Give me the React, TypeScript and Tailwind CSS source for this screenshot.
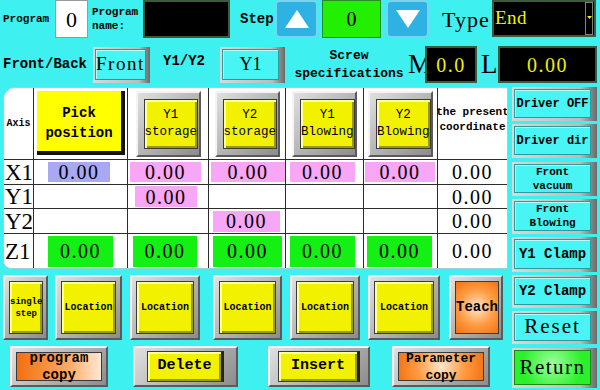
import React from "react";

type P = { className?: string; face?: string; children?: React.ReactNode };

const serif = "font-['Liberation_Serif',serif]";

// gray 3D frame around a coloured face, like the HMI buttons
const Framed = ({ className = "", face = "", children }: P) => (
  <div
    className={`flex p-[4px] border-2 border-t-[#f4f4f4] border-l-[#f4f4f4] border-b-[#5a5a5a] border-r-[#5a5a5a] bg-[linear-gradient(135deg,#e0e0e0,#8c8c8c)] ${className}`}
  >
    <div
      className={`flex-1 flex flex-col items-center justify-center text-center border border-[#3a3a3a] ${face}`}
    >
      {children}
    </div>
  </div>
);

const yellow =
  "bg-[#f2f200] shadow-[inset_2px_2px_0_#ffffa0,inset_-2px_-2px_0_#9a9a00] text-black";
const orange =
  "bg-[radial-gradient(circle,#ffe6cc_0%,#ff9a40_55%,#f07414_100%)] text-black";

const CyanBtn = ({ className = "", children }: P) => (
  <div
    className={`flex pt-[2px] pl-[2px] pr-[6px] pb-[3px] bg-[linear-gradient(90deg,#d8d8d8,#bcbcbc_80%,#6a6a6a)] ${className}`}
  >
    <div className="flex-1 flex flex-col items-center justify-center text-center border border-[#2a9a9a] bg-[#48f4f4] shadow-[inset_1px_1px_0_#b0ffff]">
      {children}
    </div>
  </div>
);

const Arrow = ({ up }: { up?: boolean }) => (
  <div className="w-[43px] h-[38px] rounded-[5px] bg-[#2eb2e4] border-2 border-[#78d4f0] flex items-center justify-center">
    <svg width="26" height="20" viewBox="0 0 26 20">
      {up ? (
        <polygon points="13,1 25,19 1,19" fill="#ffffff" />
      ) : (
        <polygon points="1,1 25,1 13,19" fill="#ffffff" />
      )}
    </svg>
  </div>
);

const Val = ({ c, w, ml, h = "h-[20px]" }: { c: string; w: string; ml: string; h?: string }) => (
  <div
    className={`${c} ${w} ${ml} ${h} flex items-center justify-center ${serif} text-[20px] tracking-[1.5px] leading-none`}
  >
    0.00
  </div>
);

const cell = "border-r border-b border-[#2c2c2c] flex items-center";
const cellLast =
  "border-b border-[#2c2c2c] flex items-center justify-center font-['Liberation_Serif',serif] text-[20px] tracking-[1.5px]";
const pink = "bg-[#f8a6f6]";
const green = "bg-[#14f014]";

const HeadBtn = ({ a, b }: { a: string; b: string }) => (
  <div className={`${cell} justify-center`}>
    <Framed className="w-[65px] h-[66px] p-[6px]" face={yellow}>
      <span className="text-[12.5px] leading-[17px] whitespace-nowrap">{a}</span>
      <span className="text-[12.5px] leading-[17px] whitespace-nowrap">{b}</span>
    </Framed>
  </div>
);

const Label = ({ t }: { t: string }) => (
  <div className={`${cell} pl-[1px] ${serif} text-[23px] leading-none`}>{t}</div>
);

export default function App() {
  return (
    <div className="w-[600px] h-[390px] overflow-hidden bg-[#3ef0f0] text-black font-['Liberation_Mono',monospace] flex flex-col">
      {/* top row */}
      <div className="h-[38px] flex">
        <span className="ml-[3px] w-[52px] self-center text-[11px] font-bold">Program</span>
        <div className="w-[33px] h-[38px] bg-white border border-[#9a9a9a] flex items-center justify-center font-['Liberation_Serif',serif] text-[22px]">
          0
        </div>
        <div className="ml-[4px] w-[51px] self-center text-[11px] font-bold leading-[14px]">
          Program
          <br />
          name:
        </div>
        <div className="w-[87px] h-[38px] bg-black border-2 border-[#3c5a3c]" />
        <span className="ml-[10px] w-[35px] self-center text-[14px] font-bold">Step</span>
        <Arrow up />
        <div className="ml-[4px] w-[59px] h-[38px] bg-[#22f000] border border-[#2a8a2a] flex items-center justify-center font-['Liberation_Serif',serif] text-[20px]">
          0
        </div>
        <div className="ml-[5px]">
          <Arrow />
        </div>
        <span className="ml-[13px] w-[50px] self-center font-['Liberation_Serif',serif] text-[22px] tracking-[1px]">
          Type
        </span>
        <div className="w-[104px] h-[37px] bg-black border-2 border-[#3c5a3c] flex items-center">
          <span className="ml-[1px] flex-1 font-['Liberation_Serif',serif] text-[19px] tracking-[0.5px] text-[#f0f000]">
            End
          </span>
          <div className="w-[8px] h-[33px] mr-[1px] border border-[#808080] flex items-start justify-center pt-[13px]">
            <svg width="5" height="3" viewBox="0 0 5 3">
              <polygon points="0,0 5,0 2.5,3" fill="#f0f000" />
            </svg>
          </div>
        </div>
      </div>

      {/* second row */}
      <div className="mt-[8px] h-[37px] flex items-center">
        <span className="ml-[3px] w-[90px] text-[14px] font-bold">Front/Back</span>
        <CyanBtn className="w-[57px] h-[36px]">
          <span className="font-['Liberation_Serif',serif] text-[19px] tracking-[1.5px]">Front</span>
        </CyanBtn>
        <span className="ml-[13px] w-[57px] text-[14px] font-bold -mt-[6px]">Y1/Y2</span>
        <CyanBtn className="w-[65px] h-[36px]">
          <span className="font-['Liberation_Serif',serif] text-[18px]">Y1</span>
        </CyanBtn>
        <div className="ml-[5px] w-[118px] text-center text-[13px] font-bold leading-[18px] whitespace-nowrap">
          Screw
          <br />
          specifications
        </div>
        <span className="w-[17px] font-['Liberation_Serif',serif] text-[27px] leading-none">M</span>
        <div className="w-[52px] h-[37px] bg-black border-2 border-[#3c5a3c] flex items-center justify-center font-['Liberation_Serif',serif] text-[20px] tracking-[1.5px] text-[#f0f000]">
          0.0
        </div>
        <span className="ml-[4px] w-[17px] font-['Liberation_Serif',serif] text-[27px] leading-none">L</span>
        <div className="w-[99px] h-[37px] bg-black border-2 border-[#3c5a3c] flex items-center justify-center font-['Liberation_Serif',serif] text-[20px] tracking-[1.5px] text-[#f0f000]">
          0.00
        </div>
      </div>

      {/* main area */}
      <div className="mt-[4px] flex">
        <div className="ml-[3px] w-[505px] flex flex-col">
          {/* table */}
          <div className="grid grid-cols-[30px_94px_81px_77px_78px_74px_69px] grid-rows-[72px_25px_24px_25px_34px] bg-white border border-[#9ad2d2] rounded-tl-[12px] rounded-bl-[8px] overflow-hidden">
            <div className={`${cell} justify-center text-[10px] font-bold`}>Axis</div>
            <div className="border-r border-b border-[#2c2c2c] pt-[3px] pl-[3px] pr-[2px] pb-[4px] flex">
              <div className="flex-1 bg-[#ffff00] border-r-[4px] border-b-[4px] border-[#111] flex flex-col items-center justify-center pt-[4px] text-[14px] font-bold leading-[20px]">
                <span>Pick</span>
                <span>position</span>
              </div>
            </div>
            <HeadBtn a="Y1" b="storage" />
            <HeadBtn a="Y2" b="storage" />
            <HeadBtn a="Y1" b="Blowing" />
            <HeadBtn a="Y2" b="Blowing" />
            <div className="border-b border-[#2c2c2c] flex flex-col items-center pt-[17px] text-[11px] font-bold leading-[15px] whitespace-nowrap">
              <span>the present</span>
              <span>coordinate</span>
            </div>

            {/* X1 */}
            <Label t="X1" />
            <div className={cell}><Val c="bg-[#a8a8f4]" w="w-[62px]" ml="ml-[14px]" /></div>
            <div className={cell}><Val c={pink} w="w-[71px]" ml="ml-[2px]" /></div>
            <div className={cell}><Val c={pink} w="w-[74px]" ml="ml-[2px]" /></div>
            <div className={cell}><Val c={pink} w="w-[65px]" ml="ml-[4px]" /></div>
            <div className={cell}><Val c={pink} w="w-[70px]" ml="ml-[1px]" /></div>
            <div className={cellLast}>0.00</div>

            {/* Y1 */}
            <Label t="Y1" />
            <div className={cell} />
            <div className={cell}><Val c={pink} w="w-[62px]" ml="ml-[7px]" h="h-[21px]" /></div>
            <div className={cell} />
            <div className={cell} />
            <div className={cell} />
            <div className={cellLast}>0.00</div>

            {/* Y2 */}
            <Label t="Y2" />
            <div className={cell} />
            <div className={cell} />
            <div className={cell}><Val c={pink} w="w-[67px]" ml="ml-[4px]" h="h-[21px]" /></div>
            <div className={cell} />
            <div className={cell} />
            <div className={cellLast}>0.00</div>

            {/* Z1 */}
            <div className="border-r border-[#2c2c2c] flex items-center pl-[1px] font-['Liberation_Serif',serif] text-[23px] leading-none">
              Z1
            </div>
            <div className="border-r border-[#2c2c2c] flex items-center"><Val c={green} w="w-[65px]" ml="ml-[14px]" h="h-[31px]" /></div>
            <div className="border-r border-[#2c2c2c] flex items-center"><Val c={green} w="w-[64px]" ml="ml-[5px]" h="h-[31px]" /></div>
            <div className="border-r border-[#2c2c2c] flex items-center"><Val c={green} w="w-[69px]" ml="ml-[4px]" h="h-[31px]" /></div>
            <div className="border-r border-[#2c2c2c] flex items-center"><Val c={green} w="w-[65px]" ml="ml-[4px]" h="h-[31px]" /></div>
            <div className="border-r border-[#2c2c2c] flex items-center"><Val c={green} w="w-[65px]" ml="ml-[3px]" h="h-[31px]" /></div>
            <div className="flex items-center justify-center font-['Liberation_Serif',serif] text-[20px] tracking-[1.5px]">
              0.00
            </div>
          </div>

          {/* location row */}
          <div className="mt-[6px] h-[65px] flex">
            <Framed className="w-[45px] p-[3px]" face={yellow}>
              <span className="text-[9px] font-bold leading-[12px]">single</span>
              <span className="text-[9px] font-bold leading-[12px]">step</span>
            </Framed>
            <Framed className="ml-[7px] w-[67px]" face={yellow}>
              <span className="text-[10px] font-bold">Location</span>
            </Framed>
            <Framed className="ml-[8px] w-[70px]" face={yellow}>
              <span className="text-[10px] font-bold">Location</span>
            </Framed>
            <Framed className="ml-[13px] w-[69px]" face={yellow}>
              <span className="text-[10px] font-bold">Location</span>
            </Framed>
            <Framed className="ml-[8px] w-[70px]" face={yellow}>
              <span className="text-[10px] font-bold">Location</span>
            </Framed>
            <Framed className="ml-[8px] w-[72px]" face={yellow}>
              <span className="text-[10px] font-bold">Location</span>
            </Framed>
            <Framed className="ml-[9px] w-[54px] p-[2px]" face={orange}>
              <span className="text-[14px] font-bold">Teach</span>
            </Framed>
          </div>

          {/* bottom row */}
          <div className="mt-[6px] h-[41px] flex">
            <Framed
              className="ml-[7px] w-[98px] p-[2px]"
              face="bg-[linear-gradient(90deg,#f27010,#ffa860_60%,#ffe8d4)]"
            >
              <span className="text-[14px] font-bold leading-[17px]">program</span>
              <span className="text-[14px] font-bold leading-[17px]">copy</span>
            </Framed>
            <Framed className="ml-[25px] w-[105px] px-[12px] py-[3px]" face={`${yellow} border-r-[3px] border-r-[#222]`}>
              <span className="text-[15px] font-bold">Delete</span>
            </Framed>
            <Framed className="ml-[30px] w-[102px] px-[8px] py-[3px]" face={`${yellow} border-r-[3px] border-r-[#222]`}>
              <span className="text-[15px] font-bold">Insert</span>
            </Framed>
            <Framed className="ml-[22px] w-[98px] p-[2px]" face={orange}>
              <span className="text-[13px] font-bold leading-[17px]">Parameter</span>
              <span className="text-[13px] font-bold leading-[17px]">copy</span>
            </Framed>
          </div>
        </div>

        {/* right column */}
        <div className="ml-[4px] w-[85px] flex flex-col">
          <CyanBtn className="h-[34px]">
            <span className="text-[12px] font-bold">Driver OFF</span>
          </CyanBtn>
          <CyanBtn className="mt-[3px] h-[34px]">
            <span className="text-[12px] font-bold">Driver dir</span>
          </CyanBtn>
          <CyanBtn className="mt-[4px] h-[34px]">
            <span className="text-[11px] font-bold leading-[14px]">Front</span>
            <span className="text-[11px] font-bold leading-[14px]">vacuum</span>
          </CyanBtn>
          <CyanBtn className="mt-[3px] h-[35px]">
            <span className="text-[11px] font-bold leading-[14px]">Front</span>
            <span className="text-[11px] font-bold leading-[14px]">Blowing</span>
          </CyanBtn>
          <CyanBtn className="mt-[3px] h-[35px]">
            <span className="text-[14px] font-bold">Y1 Clamp</span>
          </CyanBtn>
          <CyanBtn className="mt-[3px] h-[33px]">
            <span className="text-[14px] font-bold">Y2 Clamp</span>
          </CyanBtn>
          <CyanBtn className="mt-[3px] h-[33px]">
            <span className="font-['Liberation_Serif',serif] text-[21px] tracking-[2px]">Reset</span>
          </CyanBtn>
          <div className="mt-[4px] h-[40px] flex pt-[2px] pl-[2px] pr-[6px] pb-[3px] bg-[linear-gradient(90deg,#d8d8d8,#bcbcbc_80%,#6a6a6a)]">
            <div className="flex-1 flex items-center justify-center border border-[#1a8a1a] bg-[radial-gradient(circle_at_50%_40%,#a0ffa0,#2cf02c_70%)]">
              <span className="font-['Liberation_Serif',serif] text-[21px] tracking-[1.5px]">Return</span>
            </div>
          </div>
        </div>
      </div>
    </div>
  );
}
